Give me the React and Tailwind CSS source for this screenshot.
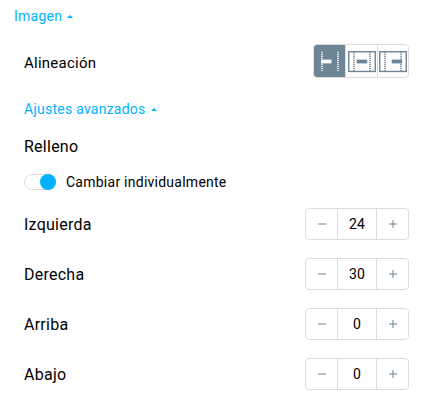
import React, { useState } from 'react'
import clsx                from 'clsx'

const ALIGNMENTS = [
  { id: 'left',   label: 'Alinear a la izquierda', frameX: 2, barX: 7 },
  { id: 'center', label: 'Centrar',                frameX: 2, barX: 10.7 },
  { id: 'right',  label: 'Alinear a la derecha',   frameX: 1, barX: 13.7 },
]

const SIDES = [
  { id: 'left',   label: 'Izquierda' },
  { id: 'right',  label: 'Derecha' },
  { id: 'top',    label: 'Arriba' },
  { id: 'bottom', label: 'Abajo' },
]

const AlignIcon = ({ frameX, barX, isActive }) => (
  <svg width="31" height="32" viewBox="0 0 31 32" fill="none" stroke="currentColor" aria-hidden="true">
    {!isActive && <rect x={frameX + 0.75} y="6.75" width="26.5" height="19.7" strokeWidth="1.4" />}
    <path
      d={`M${frameX + 6} 6.8v19.6M${frameX + 22} 6.8v19.6`}
      strokeWidth="2"
      strokeDasharray="1.3 0.7"
      opacity="0.75"
    />
    <rect x={barX} y="14.6" width="10.5" height="3.8" fill="currentColor" stroke="none" />
  </svg>
)

const Heading = ({ label }) => (
  <button className="flex h-5 items-center text-sm leading-5 text-[#00b2ff]">
    <span>{label}</span>
    <svg className="ml-[5px] mt-px" width="6" height="3" viewBox="0 0 6 3" fill="currentColor" aria-hidden="true">
      <path d="M0 3 3 0 6 3z" />
    </svg>
  </button>
)

const Stepper = ({ value, onChange }) => (
  <div className="flex h-8 w-[104px] rounded-[4px] border border-[#dcdcdc] text-[#6c8695]">
    <button className="flex w-[31px] items-center justify-center pl-px" onClick={() => onChange(value - 1)}>
      <svg width="8" height="8" viewBox="0 0 8 8" fill="currentColor" aria-hidden="true">
        <rect y="3" width="8" height="2" opacity="0.5" />
      </svg>
    </button>
    <span className="flex w-10 items-center justify-center border-x border-[#dcdcdc] text-sm text-black">{value}</span>
    <button className="flex w-[31px] items-center justify-center pl-px" onClick={() => onChange(value + 1)}>
      <svg width="8" height="8" viewBox="0 0 8 8" fill="currentColor" aria-hidden="true">
        <rect y="3" width="8" height="2" opacity="0.5" />
        <rect x="3" width="2" height="8" opacity="0.5" />
      </svg>
    </button>
  </div>
)

const App = () => {
  const [align, setAlign]           = useState('left')
  const [individual, setIndividual] = useState(true)
  const [padding, setPadding]       = useState({ left: 24, right: 30, top: 0, bottom: 0 })

  return (
    <div className="h-[404px] w-[423px] overflow-hidden bg-white pl-3.5 pr-3.5 pt-1.5 font-['Roboto',sans-serif] tracking-[0.25px] text-black">
      <Heading label="Imagen" />

      <div className="pl-2.5">
        <div className="mt-[18px] flex h-[34px] items-center justify-between">
          <span className="pt-1 text-[15px] leading-5">Alineación</span>
          <div className="flex h-[34px] w-24 overflow-hidden rounded-[4px] border border-[#dcdcdc]">
            {ALIGNMENTS.map(({ id, label, frameX, barX }) => (
              <button
                key={id}
                aria-label={label}
                onClick={() => setAlign(id)}
                className={clsx(
                  'h-8 shrink-0 border-l border-[#dcdcdc] first:w-[31px] first:border-l-0 w-8',
                  align === id ? 'bg-[#6c8695] text-white' : 'text-[#6c8695]'
                )}
              >
                <AlignIcon frameX={frameX} barX={barX} isActive={align === id} />
              </button>
            ))}
          </div>
        </div>

        <div className="mt-[21px]">
          <Heading label="Ajustes avanzados" />
        </div>

        <div className="mt-[18px] text-base leading-5">Relleno</div>

        <div className="mt-[15px] flex h-5 items-center">
          <button
            role="switch"
            aria-checked={individual}
            onClick={() => setIndividual(!individual)}
            className={clsx(
              'flex h-4 w-8 items-center rounded-full border border-[#dcdcdc]',
              individual ? 'justify-end' : 'justify-start'
            )}
          >
            <span className="-mr-px h-4 w-4 shrink-0 rounded-full bg-[#00b2ff]" />
          </button>
          <span className="ml-2.5 text-sm leading-5">Cambiar individualmente</span>
        </div>

        <div className="mt-4 flex flex-col gap-[18px]">
          {SIDES.map(({ id, label }) => (
            <div key={id} className="flex h-8 items-center justify-between">
              <span className="pt-0.5 text-base leading-5">{label}</span>
              <Stepper value={padding[id]} onChange={value => setPadding({ ...padding, [id]: value })} />
            </div>
          ))}
        </div>
      </div>
    </div>
  )
}

export default App
